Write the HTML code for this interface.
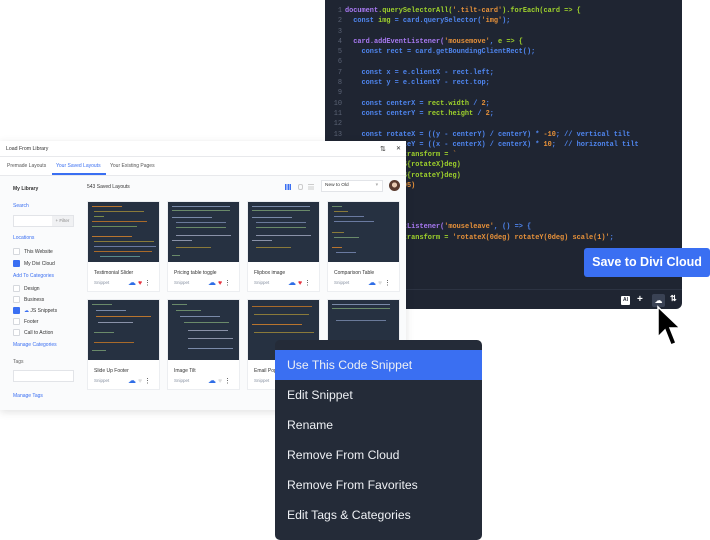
<!DOCTYPE html>
<html><head><meta charset="utf-8"><style>
*{box-sizing:border-box;margin:0;padding:0}
body{width:710px;height:540px;background:#fff;position:relative;overflow:hidden;font-family:"Liberation Sans",sans-serif}
.code{position:absolute;left:325px;top:0;width:357px;height:309px;background:#1f2532;border-radius:0 0 6px 6px}
.code pre{position:absolute;left:0;top:6px;font-family:"Liberation Mono",monospace;font-size:6.9px;line-height:10.3px;color:#4f86f0;font-weight:bold}
.ln{color:#5b6375;display:inline-block;width:17px;text-align:right;margin-right:3px;font-weight:normal}
.p{color:#a879f2}.g{color:#9fd22c}.o{color:#e8923a}.b{color:#4f86f0}.w{color:#c9d0dc}
.bar{position:absolute;left:0;right:0;top:289px;border-top:1px solid #2c3342}
.save{position:absolute;left:584px;top:248px;width:126px;height:29px;background:#3a6ff2;border-radius:3px;color:#fff;font-size:12.5px;font-weight:bold;text-align:center;line-height:29px}
.lib{position:absolute;left:0;top:141px;width:406px;height:269px;background:#fff;box-shadow:0 2px 8px rgba(0,0,0,.12);font-size:5px;color:#333}
.lib .hd{height:16px;border-bottom:1px solid #e8e9ec;padding:5px 6px;font-size:5.2px}
.tabs{height:19px;border-bottom:1px solid #e8e9ec;position:relative;font-size:5px;color:#555}
.tabs span{position:absolute;top:6px}
.body{position:absolute;top:35px;left:0;right:0;bottom:0;background:#fafbfc}
.sb{position:absolute;font-size:5px}
.blue{color:#3a6ff2}
.cb{position:absolute;width:7px;height:7px;border:1px solid #d5d8dd;border-radius:1px;background:#fff}
.cb.on{background:#3a6ff2;border-color:#3a6ff2}
.card{position:absolute;width:73px;height:91px;background:#fff;border:1px solid #eceef1}
.th{height:60px;background-color:#263141;position:relative;overflow:hidden}
.th i{position:absolute;height:1.2px;display:block}
.ct{position:absolute;left:6px;top:68px;font-size:5px;color:#333}
.cm{position:absolute;left:6px;top:78px;font-size:4.5px;color:#8a93a3}
.ic{position:absolute;top:76px;left:40px;width:30px;height:8px}
.menu{position:absolute;left:275px;top:340px;width:207px;height:200px;background:#242b38;border-radius:5px;color:#eef0f4;font-size:12.2px}
.menu div{height:30px;line-height:30px;padding-left:12px}
.menu .hl{background:#3a6ff2;margin-top:10px}
</style></head><body>
<div class="code"><pre><span class="ln">1</span><span class="p">document</span><span class="g">.querySelectorAll(</span><span class="o">'.tilt-card'</span><span class="g">).forEach(card =&gt; {</span>
<span class="ln">2</span>  const <span class="g">img</span> = card.querySelector(<span class="o">'img'</span>);
<span class="ln">3</span>
<span class="ln">4</span>  <span class="p">card.addEventListener(</span><span class="o">'mousemove'</span>, <span class="g">e =&gt; {</span>
<span class="ln">5</span>    const rect = card.getBoundingClientRect();
<span class="ln">6</span>
<span class="ln">7</span>    const x = e.clientX - rect.left;
<span class="ln">8</span>    const y = e.clientY - rect.top;
<span class="ln">9</span>
<span class="ln">10</span>    const centerX = <span class="g">rect.width</span> / <span class="o">2</span>;
<span class="ln">11</span>    const centerY = <span class="g">rect.height</span> / <span class="o">2</span>;
<span class="ln">12</span>
<span class="ln">13</span>    const rotateX = ((y - centerY) / centerY) * <span class="o">-10</span>; // vertical tilt
<span class="ln">14</span>    const rotateY = ((x - centerX) / centerX) * <span class="o">10</span>;  // horizontal tilt
<span class="ln">15</span>    <span class="g">img.style.transform = </span><span class="o">`</span>
<span class="ln">16</span>      <span class="g">rotateX(${rotateX}deg)</span>
<span class="ln">17</span>      <span class="g">rotateY(${rotateY}deg)</span>
<span class="ln">18</span>      <span class="o">scale(1.05)</span>
<span class="ln">19</span>    <span class="o">`</span>;
<span class="ln">20</span>  });
<span class="ln">21</span>
<span class="ln">22</span>  <span class="p">card.addEventListener(</span><span class="o">'mouseleave'</span>, () =&gt; {
<span class="ln">23</span>    <span class="g">img.style.transform = </span><span class="o">'rotateX(0deg) rotateY(0deg) scale(1)'</span>;
</pre>
<div class="bar"></div>
<div style="position:absolute;left:296px;top:296px;width:9px;height:9px;background:#fff;color:#1f2532;font-size:5px;font-weight:bold;text-align:center;line-height:9px;border-radius:1px">AI</div>
<div style="position:absolute;left:312px;top:294px;color:#fff;font-size:10px;font-weight:bold">+</div>
<div style="position:absolute;left:327px;top:294px;width:13px;height:13px;background:#3a4254;border-radius:2px;color:#fff;font-size:8px;text-align:center;line-height:13px">☁</div>
<div style="position:absolute;left:345px;top:294px;color:#fff;font-size:8px;font-weight:bold">⇅</div>
</div>
<div class="save">Save to Divi Cloud</div>
<svg style="position:absolute;left:655px;top:305px" width="30" height="46" viewBox="0 0 30 46"><path d="M3 2 L3 32 L10 25 L16 40 L21 38 L15 23 L25 23 Z" fill="#000" stroke="#fff" stroke-width="1.5"/></svg>

<div class="lib">
<div class="hd">Load From Library<span style="position:absolute;left:380px;top:4px;font-size:7px">⇅</span><span style="position:absolute;left:396px;top:4px;font-size:6px">✕</span></div>
<div class="tabs"><span style="left:7px">Premade Layouts</span><span style="left:56px;color:#3a6ff2">Your Saved Layouts</span><span style="left:110px">Your Existing Pages</span><div style="position:absolute;left:52px;top:16px;width:54px;height:2px;background:#3a6ff2"></div></div>
<div class="body">
<div class="sb" style="left:13px;top:10px;font-weight:bold">My Library</div>
<div class="sb blue" style="left:13px;top:27px">Search</div>
<div style="position:absolute;left:13px;top:39px;width:61px;height:12px;border:1px solid #e2e4e8;background:#fff"><span style="position:absolute;right:0;top:0;height:10px;width:21px;background:#f0f1f3;font-size:4.5px;line-height:10px;text-align:center;color:#888">+ Filter</span></div>
<div class="sb blue" style="left:13px;top:59px">Locations</div>
<div class="cb" style="left:13px;top:72px"></div><div class="sb" style="left:24px;top:73px">This Website</div>
<div class="cb on" style="left:13px;top:84px"></div><div class="sb" style="left:24px;top:85px">My Divi Cloud</div>
<div class="sb blue" style="left:13px;top:97px">Add To Categories</div>
<div class="cb" style="left:13px;top:109px"></div><div class="sb" style="left:24px;top:110px">Design</div>
<div class="cb" style="left:13px;top:120px"></div><div class="sb" style="left:24px;top:121px">Business</div>
<div class="cb on" style="left:13px;top:131px"></div><div class="sb" style="left:24px;top:132px"><span class="blue">☁</span> JS Snippets</div>
<div class="cb" style="left:13px;top:142px"></div><div class="sb" style="left:24px;top:143px">Footer</div>
<div class="cb" style="left:13px;top:153px"></div><div class="sb" style="left:24px;top:154px">Call to Action</div>
<div class="sb blue" style="left:13px;top:166px">Manage Categories</div>
<div class="sb" style="left:13px;top:183px;color:#666">Tags</div>
<div style="position:absolute;left:13px;top:194px;width:61px;height:12px;border:1px solid #e2e4e8;background:#fff"></div>
<div class="sb blue" style="left:13px;top:217px">Manage Tags</div>
<div class="sb" style="left:87px;top:8px">543 Saved Layouts</div>
<div style="position:absolute;left:285px;top:8px;width:6px;height:6px;background:repeating-linear-gradient(90deg,#3a6ff2 0 1.5px,transparent 1.5px 2.3px)"></div>
<div style="position:absolute;left:298px;top:8px;width:5px;height:6px;border:1px solid #ccc;border-radius:2px"></div>
<div style="position:absolute;left:308px;top:8px;width:6px;height:6px;background:repeating-linear-gradient(180deg,#ccc 0 1px,transparent 1px 2.3px)"></div>
<div style="position:absolute;left:321px;top:4px;width:62px;height:12px;border:1px solid #e2e4e8;background:#fff;font-size:4.8px;line-height:10px;padding-left:3px">New to Old<span style="position:absolute;right:4px;color:#aaa">▾</span></div>
<div style="position:absolute;left:389px;top:4px;width:11px;height:11px;border-radius:50%;background:radial-gradient(circle at 50% 45%,#e8c8b0 0 30%,#5a3a2e 32%)"></div>

<div class="card" style="left:87px;top:25px"><div class="th"><i style="left:4px;top:4px;width:30px;background:#b8742e"></i><i style="left:6px;top:9px;width:50px;background:#8a7a3a"></i><i style="left:6px;top:14px;width:10px;background:#7a8a4a"></i><i style="left:4px;top:19px;width:55px;background:#a86a2a"></i><i style="left:4px;top:24px;width:45px;background:#6a8a5a"></i><i style="left:4px;top:34px;width:40px;background:#b8742e"></i><i style="left:6px;top:39px;width:60px;background:#8a7a3a"></i><i style="left:6px;top:44px;width:62px;background:#6a7aa0"></i><i style="left:6px;top:49px;width:58px;background:#a86a2a"></i><i style="left:12px;top:54px;width:40px;background:#5a8a8a"></i></div><div class="ct">Testimonial Slider</div><div class="cm">Snippet</div><div class="ic"><span style="color:#2f6de6;font-size:8px">☁</span><span style="color:#e5333f;font-size:7px;margin-left:2px">♥</span><span style="font-size:7px;margin-left:2px">⋮</span></div></div>
<div class="card" style="left:167px;top:25px"><div class="th"><i style="left:4px;top:4px;width:58px;background:#7a8aa8"></i><i style="left:4px;top:8px;width:58px;background:#6a8a6a"></i><i style="left:4px;top:15px;width:40px;background:#7a8aa8"></i><i style="left:8px;top:20px;width:50px;background:#6a7a9a"></i><i style="left:8px;top:25px;width:50px;background:#6a8a6a"></i><i style="left:8px;top:33px;width:55px;background:#8a92a8"></i><i style="left:4px;top:38px;width:20px;background:#8a92a8"></i><i style="left:8px;top:45px;width:35px;background:#8a7a3a"></i><i style="left:4px;top:53px;width:8px;background:#6a8a6a"></i></div><div class="ct">Pricing table toggle</div><div class="cm">Snippet</div><div class="ic"><span style="color:#2f6de6;font-size:8px">☁</span><span style="color:#e5333f;font-size:7px;margin-left:2px">♥</span><span style="font-size:7px;margin-left:2px">⋮</span></div></div>
<div class="card" style="left:247px;top:25px"><div class="th"><i style="left:4px;top:4px;width:58px;background:#7a8aa8"></i><i style="left:4px;top:8px;width:58px;background:#6a8a6a"></i><i style="left:4px;top:15px;width:40px;background:#7a8aa8"></i><i style="left:8px;top:20px;width:50px;background:#6a7a9a"></i><i style="left:8px;top:25px;width:50px;background:#6a8a6a"></i><i style="left:8px;top:33px;width:55px;background:#8a92a8"></i><i style="left:4px;top:38px;width:20px;background:#8a92a8"></i><i style="left:8px;top:45px;width:35px;background:#8a7a3a"></i></div><div class="ct">Flipbox image</div><div class="cm">Snippet</div><div class="ic"><span style="color:#2f6de6;font-size:8px">☁</span><span style="color:#e5333f;font-size:7px;margin-left:2px">♥</span><span style="font-size:7px;margin-left:2px">⋮</span></div></div>
<div class="card" style="left:327px;top:25px"><div class="th"><i style="left:4px;top:4px;width:10px;background:#6a8a6a"></i><i style="left:6px;top:9px;width:14px;background:#8a7a3a"></i><i style="left:6px;top:14px;width:30px;background:#6a7aa0"></i><i style="left:6px;top:19px;width:40px;background:#6a7aa0"></i><i style="left:4px;top:30px;width:12px;background:#8a7a3a"></i><i style="left:6px;top:35px;width:25px;background:#6a8a6a"></i><i style="left:4px;top:45px;width:10px;background:#b8742e"></i><i style="left:8px;top:50px;width:20px;background:#6a7aa0"></i></div><div class="ct">Comparison Table</div><div class="cm">Snippet</div><div class="ic"><span style="color:#2f6de6;font-size:8px">☁</span><span style="color:#ddd;font-size:7px;margin-left:2px">♥</span><span style="font-size:7px;margin-left:2px">⋮</span></div></div>
<div class="card" style="left:87px;top:123px"><div class="th"><i style="left:4px;top:4px;width:20px;background:#6a8a6a"></i><i style="left:8px;top:10px;width:30px;background:#7a8aa8"></i><i style="left:8px;top:16px;width:55px;background:#b8742e"></i><i style="left:10px;top:22px;width:35px;background:#8a92a8"></i><i style="left:6px;top:32px;width:20px;background:#6a8a6a"></i><i style="left:6px;top:42px;width:40px;background:#a86a2a"></i><i style="left:4px;top:50px;width:14px;background:#6a8a6a"></i></div><div class="ct">Slide Up Footer</div><div class="cm">Snippet</div><div class="ic"><span style="color:#2f6de6;font-size:8px">☁</span><span style="color:#ddd;font-size:7px;margin-left:2px">♥</span><span style="font-size:7px;margin-left:2px">⋮</span></div></div>
<div class="card" style="left:167px;top:123px"><div class="th"><i style="left:4px;top:4px;width:15px;background:#6a8a6a"></i><i style="left:8px;top:10px;width:25px;background:#6a8a6a"></i><i style="left:12px;top:16px;width:40px;background:#7a8aa8"></i><i style="left:16px;top:22px;width:45px;background:#6a8a6a"></i><i style="left:20px;top:30px;width:40px;background:#8a92a8"></i><i style="left:20px;top:38px;width:45px;background:#8a92a8"></i><i style="left:20px;top:48px;width:45px;background:#7a8aa8"></i></div><div class="ct">Image Tilt</div><div class="cm">Snippet</div><div class="ic"><span style="color:#2f6de6;font-size:8px">☁</span><span style="color:#ddd;font-size:7px;margin-left:2px">♥</span><span style="font-size:7px;margin-left:2px">⋮</span></div></div>
<div class="card" style="left:247px;top:123px"><div class="th"><i style="left:4px;top:6px;width:60px;background:#a86a2a"></i><i style="left:6px;top:14px;width:55px;background:#8a7a3a"></i><i style="left:4px;top:24px;width:50px;background:#b8742e"></i><i style="left:6px;top:32px;width:60px;background:#8a7a3a"></i></div><div class="ct">Email Popup</div><div class="cm">Snippet</div></div>
<div class="card" style="left:327px;top:123px"><div class="th"><i style="left:4px;top:4px;width:58px;background:#7a8aa8"></i><i style="left:4px;top:8px;width:58px;background:#6a8a6a"></i><i style="left:8px;top:20px;width:50px;background:#6a7a9a"></i></div></div>
</div>
</div>

<div class="menu">
<div class="hl">Use This Code Snippet</div>
<div>Edit Snippet</div>
<div>Rename</div>
<div>Remove From Cloud</div>
<div>Remove From Favorites</div>
<div>Edit Tags &amp; Categories</div>
</div>
</body></html>
